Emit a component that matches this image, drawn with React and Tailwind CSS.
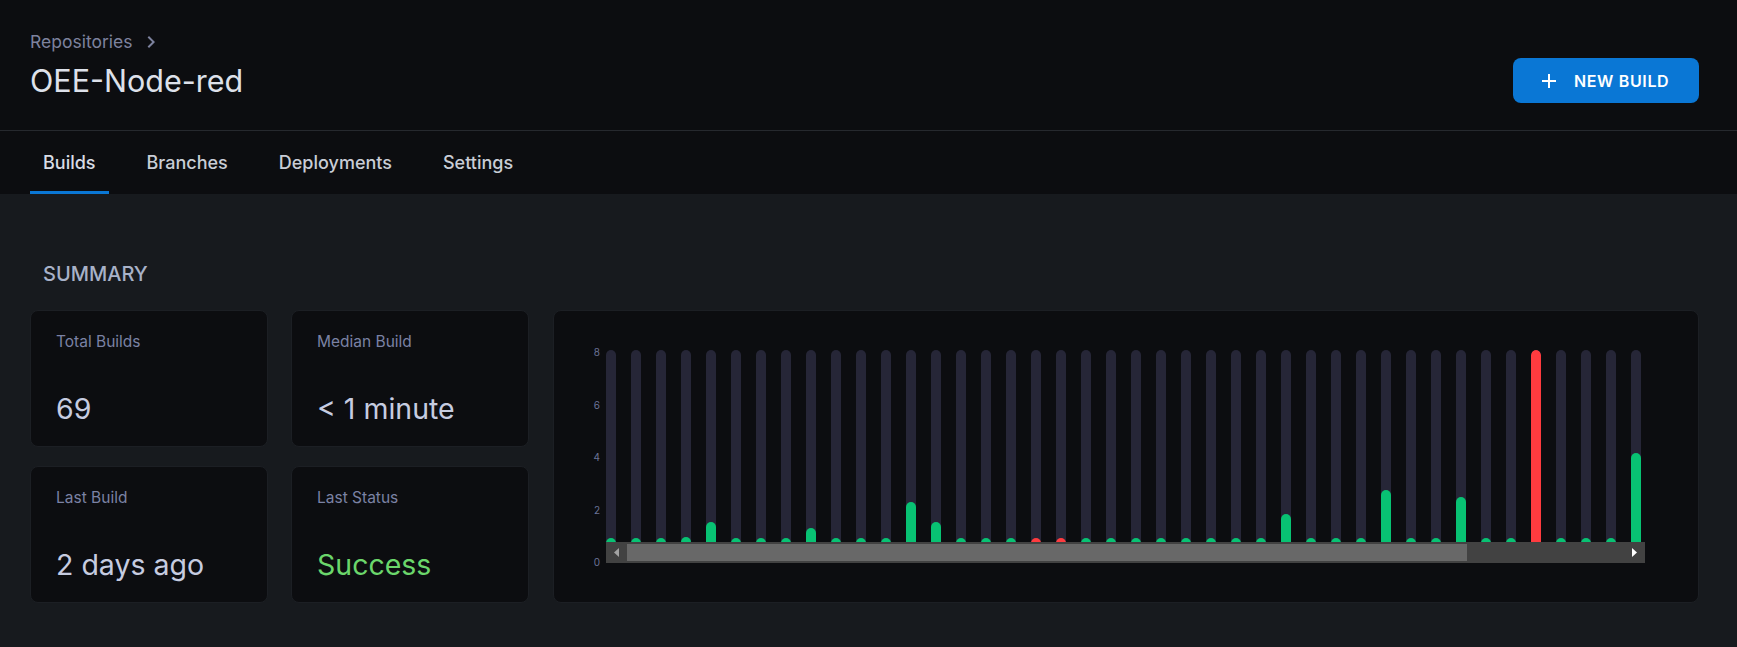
import React from 'react'
import { MdAdd, MdChevronRight } from 'react-icons/md'

const tabs = ['Builds', 'Branches', 'Deployments', 'Settings']

const stats = [
  { label: 'Total Builds', value: '69' },
  { label: 'Median Build', value: '< 1 minute' },
  { label: 'Last Build', value: '2 days ago' },
  { label: 'Last Status', value: 'Success', success: true },
]

// visible bar height in px (track is 213px), f = failed
const builds = [
  25, 25, 25, 26, 41, 25, 25, 25, 35, 25, 25, 25, 61, 41, 25, 25, 25, 'f25', 'f25', 25, 25,
  25, 25, 25, 25, 25, 25, 49, 25, 25, 25, 73, 25, 25, 66, 25, 25, 'f213', 25, 25, 25, 110,
]

function StatCard({ label, value, success }) {
  return (
    <div className="h-[137px] flex flex-col justify-between pt-[21px] pb-[20px] px-[25px] bg-[#0c0d10] border border-[#1c1f24] rounded-lg">
      <div className="text-[15.5px] leading-5 text-[#7b82a4]">{label}</div>
      <div className={`text-[28.5px] leading-[34px] ${success ? 'text-[#6bd66b]' : 'text-[#c6cce0]'}`}>
        {value}
      </div>
    </div>
  )
}

function BuildsChart() {
  return (
    <div className="flex-1 h-[293px] bg-[#0c0d10] border border-[#1c1f24] rounded-lg pt-[35px] pl-[26px]">
      <div className="flex">
        {/* y axis */}
        <div className="w-[20px] h-[222px] flex flex-col justify-between items-end text-[10px] leading-3 text-[#6b7397]">
          <span>8</span>
          <span>6</span>
          <span>4</span>
          <span>2</span>
          <span>0</span>
        </div>

        <div className="relative ml-[6px] mt-[4px] w-[1039px] h-[213px]">
          <div className="flex gap-[15px] h-full">
            {builds.map((b, idx) => {
              const failed = typeof b === 'string'
              const h = failed ? parseInt(b.slice(1)) : b
              return (
                <div key={idx} className="w-[10px] h-full flex flex-col justify-end bg-[#262637] rounded-t-full overflow-hidden">
                  <div
                    className={`w-full rounded-t-full ${failed ? 'bg-[#ff3b3f]' : 'bg-[#08c273]'}`}
                    style={{ height: h }}
                  />
                </div>
              )
            })}
          </div>

          {/* horizontal scrollbar */}
          <div className="absolute left-0 right-0 bottom-0 h-[21px] bg-[#424242] flex items-center">
            <div className="w-[21px] h-[21px] flex items-center justify-center">
              <svg width="21" height="21" viewBox="0 0 21 21">
                <polygon points="13,6 8,10.5 13,15" fill="#a3a3a3" />
              </svg>
            </div>
            <div className="w-[840px] h-[17px] bg-[#686868]" />
            <div className="flex-1" />
            <div className="w-[21px] h-[21px] flex items-center justify-center">
              <svg width="21" height="21" viewBox="0 0 21 21">
                <polygon points="8,6 13,10.5 8,15" fill="#ffffff" />
              </svg>
            </div>
          </div>
        </div>
      </div>
    </div>
  )
}

export default function App() {
  return (
    <div className="min-h-screen bg-[#171a1e] font-['Inter',sans-serif]">
      {/* header */}
      <div className="bg-[#0c0d10]">
        <div className="pt-[30px] pb-[27px] pl-[30px] pr-[38px] border-b border-[#26292e]">
          <div className="h-[24px] flex items-center text-[17.5px] text-[#7d829e]">
            <span>Repositories</span>
            <MdChevronRight size={24} className="ml-[7px] text-[#7d829e]" />
          </div>
          <div className="mt-[4px] flex items-center justify-between">
            <h1 className="text-[30.5px] leading-9 text-[#dde1ea]">OEE-Node-red</h1>
            <button className="w-[186px] h-[45px] pl-[24px] flex items-center gap-[13px] bg-[#0a77d5] rounded-lg text-white">
              <MdAdd size={24} />
              <span className="text-[16px] font-semibold tracking-[0.04em]">NEW BUILD</span>
            </button>
          </div>
        </div>

        {/* tabs */}
        <div className="h-[63px] pl-[30px] flex gap-[25px]">
          {tabs.map((t, i) => (
            <div
              key={t}
              className={`h-full px-[13px] pt-[3px] flex items-center border-b-[3px] text-[18px] font-medium ${
                i === 0 ? 'border-[#0a77d5] text-[#d8dce5]' : 'border-transparent text-[#c9cdd6]'
              }`}
            >
              {t}
            </div>
          ))}
        </div>
      </div>

      {/* content */}
      <div className="pt-[66px] pb-[44px] pl-[30px] pr-[38px]">
        <h2 className="ml-[13px] mb-[22px] text-[20px] leading-7 font-medium text-[#a8b2c8]">SUMMARY</h2>
        <div className="flex gap-[24px]">
          <div className="w-[499px] grid grid-cols-2 gap-x-[23px] gap-y-[19px]">
            {stats.map((s) => (
              <StatCard key={s.label} {...s} />
            ))}
          </div>
          <BuildsChart />
        </div>
      </div>
    </div>
  )
}
